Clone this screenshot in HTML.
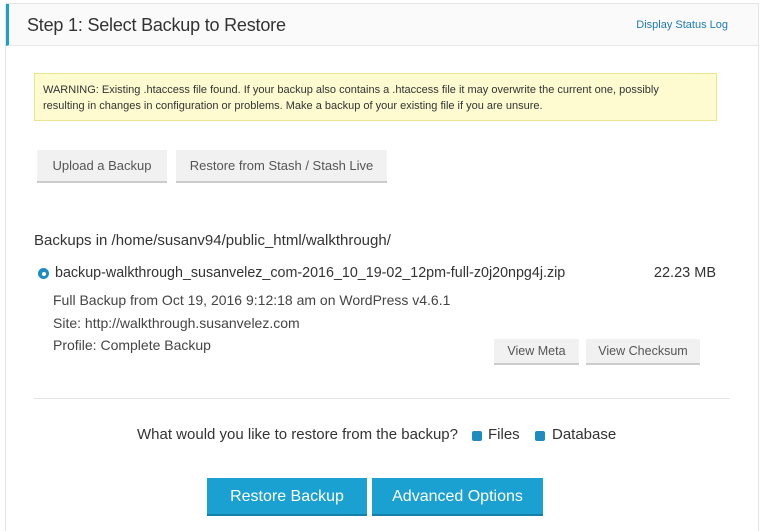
<!DOCTYPE html>
<html style="height:531px;overflow:hidden"><head><meta charset="utf-8"><style>
*{box-sizing:border-box;margin:0;padding:0}
html,body{width:768px;height:531px;overflow:hidden}
body{background:#fff;font-family:"Liberation Sans",sans-serif;color:#444;position:relative}
.panel{position:absolute;left:5px;top:3px;width:754px;height:545px;border:1px solid #e5e5e5;background:#fff}
.hdr{position:absolute;left:0;top:0;right:0;height:42px;background:#fafafa;border-bottom:1px solid #e8e8e8;border-left:3px solid #1ba0d2}
.hdr h1{position:absolute;left:18px;top:11px;font-size:18px;font-weight:normal;color:#333;letter-spacing:-0.2px}
.hdr a{position:absolute;right:30px;top:15px;font-size:11px;color:#1e7ab5;text-decoration:none}
.abs{position:absolute;white-space:nowrap}
.warn{position:absolute;left:34px;top:73px;width:683px;height:48px;background:#fdfbcf;border:1px solid #ece48c;font-size:11px;line-height:16px;padding:8px 30px 8px 8px;color:#333}
.btn{position:absolute;background:#f1f1f1;border-bottom:2px solid #ccc;font-size:13px;color:#555;text-align:center}
.pb{position:absolute;background:#1ba0d2;border-bottom:2px solid #157fa7;color:#fff;font-size:16px;text-align:center}
.cb{position:absolute;width:10px;height:10px;background:#1e8cbe;border-radius:2px}
</style></head><body>
<div class="panel"><div class="hdr"><h1>Step 1: Select Backup to Restore</h1><a>Display Status Log</a></div></div>
<div class="warn">WARNING: Existing .htaccess file found. If your backup also contains a .htaccess file it may overwrite the current one, possibly resulting in changes in configuration or problems. Make a backup of your existing file if you are unsure.</div>
<div class="btn" style="left:37px;top:150px;width:130px;height:33px;line-height:31px">Upload a Backup</div>
<div class="btn" style="left:176px;top:150px;width:211px;height:33px;line-height:31px">Restore from Stash / Stash Live</div>
<div class="abs" style="left:34px;top:232px;font-size:15px;color:#333">Backups in /home/susanv94/public_html/walkthrough/</div>
<div class="abs" style="left:38px;top:268px;width:11px;height:11px;border-radius:50%;background:#1e8cbe"><div style="position:absolute;left:3.5px;top:3.5px;width:4px;height:4px;border-radius:50%;background:#fff"></div></div>
<div class="abs" style="left:55px;top:265px;font-size:14.3px;color:#333">backup-walkthrough_susanvelez_com-2016_10_19-02_12pm-full-z0j20npg4j.zip</div>
<div class="abs" style="left:640px;top:265px;width:76px;text-align:right;font-size:14.5px;color:#333">22.23 MB</div>
<div class="abs" style="left:53px;top:292px;font-size:14px">Full Backup from Oct 19, 2016 9:12:18 am on WordPress v4.6.1</div>
<div class="abs" style="left:53px;top:315px;font-size:14px">Site: http://walkthrough.susanvelez.com</div>
<div class="abs" style="left:53px;top:337px;font-size:14px">Profile: Complete Backup</div>
<div class="btn" style="left:494px;top:339px;width:85px;height:26px;line-height:25px;font-size:12.5px">View Meta</div>
<div class="btn" style="left:586px;top:339px;width:114px;height:26px;line-height:25px;font-size:12.5px">View Checksum</div>
<div class="abs" style="left:34px;top:398px;width:696px;height:1px;background:#e5e5e5"></div>
<div class="abs" style="left:137px;top:426px;font-size:15px;color:#333">What would you like to restore from the backup?</div>
<div class="cb" style="left:472px;top:431px"></div>
<div class="abs" style="left:488px;top:426px;font-size:15px;color:#333">Files</div>
<div class="cb" style="left:535px;top:431px"></div>
<div class="abs" style="left:552px;top:426px;font-size:15px;color:#333">Database</div>
<div class="pb" style="left:207px;top:478px;width:160px;height:38px;line-height:37px">Restore Backup</div>
<div class="pb" style="left:372px;top:478px;width:171px;height:38px;line-height:37px">Advanced Options</div>
</body></html>
